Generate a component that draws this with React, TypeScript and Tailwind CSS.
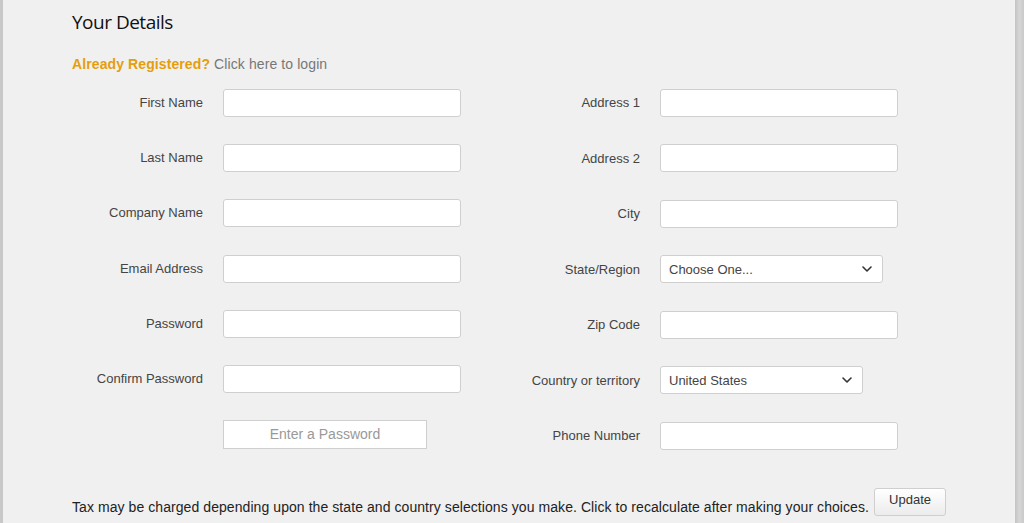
import React from "react"

const left = ["First Name", "Last Name", "Company Name", "Email Address", "Password", "Confirm Password"]

function Chevron() {
  return (
    <svg width="10" height="6" viewBox="0 0 10 6" className="shrink-0">
      <path d="M1 1l4 4 4-4" fill="none" stroke="#333" strokeWidth="1.6" strokeLinecap="round" strokeLinejoin="round" />
    </svg>
  )
}

function Input({ w = "w-[238px]" }: { w?: string }) {
  return <div className={`${w} h-[28px] rounded-[3px] border border-[#cfcfcf] bg-white`} />
}

function Select({ value, w }: { value: string; w: string }) {
  return (
    <div className={`${w} flex h-[28px] items-center justify-between rounded-[3px] border border-[#cfcfcf] bg-white pl-[8px] pr-[10px] text-[13px] text-[#444]`}>
      <span>{value}</span>
      <Chevron />
    </div>
  )
}

function Row({ label, children, labelW, h = "h-[55px]" }: { label: string; children: React.ReactNode; labelW: string; h?: string }) {
  return (
    <div className={`flex ${h} items-center`}>
      <label className={`${labelW} shrink-0 text-right text-[13px] text-[#444]`}>{label}</label>
      <div className="ml-[20px]">{children}</div>
    </div>
  )
}

export default function App() {
  return (
    <div className="flex h-[523px] w-full overflow-hidden border-l-[3px] border-[#c8c8c8] bg-[#f0f0f0] font-['Liberation_Sans',Arial,sans-serif]">
      <div className="flex-1 pl-[69px] pt-[10px]">
        <h1 className="font-['Open_Sans',sans-serif] text-[19px] leading-[24px] tracking-[-0.5px] text-[#111]">Your Details</h1>
        <p className="mt-[22px] text-[14px] leading-[16px] tracking-[0.1px]">
          <span className="font-bold text-[#e59e0c]">Already Registered?</span>{" "}
          <span className="text-[#777]">Click here to login</span>
        </p>

        <div className="mt-[3px] flex">
          <div className="flex flex-col">
            {left.map((l) => (
              <Row key={l} label={l} labelW="w-[131px]" h="h-[55.3px]">
                <Input />
              </Row>
            ))}
            <div className="flex h-[55.3px] items-center pl-[151px]">
              <div className="flex h-[29px] w-[204px] items-center justify-center border border-[#cfcfcf] bg-white text-[14px] text-[#999]">
                Enter a Password
              </div>
            </div>
          </div>

          <div className="ml-[20px] flex flex-col">
            <Row label="Address 1" labelW="w-[159px]" h="h-[55.5px]">
              <Input />
            </Row>
            <Row label="Address 2" labelW="w-[159px]" h="h-[55.5px]">
              <Input />
            </Row>
            <Row label="City" labelW="w-[159px]" h="h-[55.5px]">
              <Input />
            </Row>
            <Row label="State/Region" labelW="w-[159px]" h="h-[55.5px]">
              <Select value="Choose One..." w="w-[223px]" />
            </Row>
            <Row label="Zip Code" labelW="w-[159px]" h="h-[55.5px]">
              <Input />
            </Row>
            <Row label="Country or territory" labelW="w-[159px]" h="h-[55.5px]">
              <Select value="United States" w="w-[203px]" />
            </Row>
            <Row label="Phone Number" labelW="w-[159px]" h="h-[55.5px]">
              <Input />
            </Row>
          </div>
        </div>

        <div className="mt-[24px] flex items-start">
          <p className="mt-[11px] text-[14px] leading-[16px] tracking-[0.07px] text-[#222]">
            Tax may be charged depending upon the state and country selections you make. Click to recalculate after making your choices.
          </p>
          <button className="ml-[5px] h-[28px] w-[72px] rounded-[3px] border border-[#cfcfcf] bg-gradient-to-b from-white to-[#ececec] pb-[3px] text-[13px] text-[#333]">
            Update
          </button>
        </div>
      </div>
      <div className="w-[9px] shrink-0 bg-gradient-to-r from-[#c4c4c4] via-[#d6d6d6] to-[#cacaca]" />
    </div>
  )
}
